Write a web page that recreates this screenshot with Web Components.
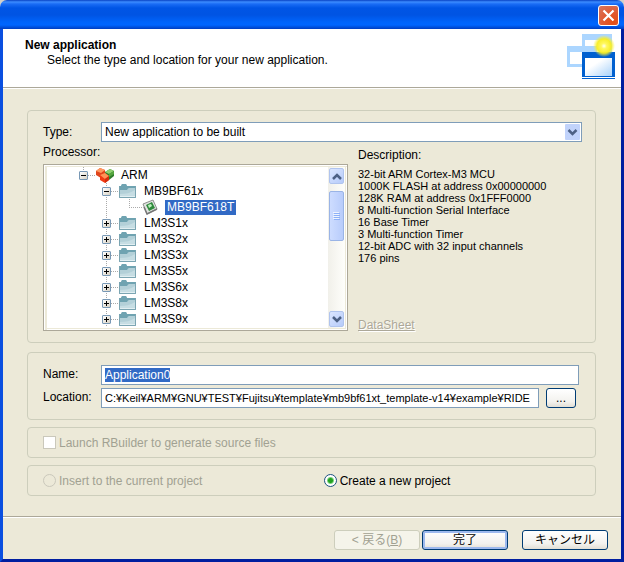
<!DOCTYPE html>
<html lang="ja">
<head>
<meta charset="utf-8">
<title>New application</title>
<style>
html, body { height: 100%; margin: 0; }
body { background: #d4d0c8; font: 12px/12px "Liberation Sans", "Noto Sans CJK JP", sans-serif; color: #000; }
</style>
</head>
<body>
<wizard-window></wizard-window>
<script>
function define(name, html, setup) {
  const template = document.createElement('template');
  template.innerHTML = '<style>*{box-sizing:border-box}</style>' + html;
  customElements.define(name, class extends HTMLElement {
    constructor() {
      super();
      this.attachShadow({ mode: 'open' }).append(template.content.cloneNode(true));
    }
    connectedCallback() { if (setup) setup(this, this.shadowRoot); }
  });
}

define('group-box', `
<style>
:host { display: block; box-sizing: border-box; border: 1px solid #cdcebc; border-radius: 4px; }
</style>
<slot></slot>`);

define('xp-button', `
<style>
:host { display: block; width: 86px; height: 20px; }
:host([small]) { width: 30px; }
button { display: block; width: 100%; height: 100%; padding: 0; border: 1px solid #003c74; border-radius: 3px;
  font: inherit; color: #000; background: linear-gradient(#fff, #f3f2ee 70%, #e2dfd5); }
:host([primary]) button { box-shadow: inset 0 0 0 2px #9db9ee; }
button:disabled { color: #a1a192; border-color: #cdcebc; background: #f5f4ea; }
</style>
<button type="button"><slot></slot></button>`, (host, root) => {
  root.querySelector('button').disabled = host.hasAttribute('disabled');
});

define('title-bar', `
<style>
:host { display: flex; justify-content: flex-end; align-items: center; height: 29px; padding: 2px 5px 0 0; box-sizing: border-box;
  background: linear-gradient(#0842c4 0, #3c8cff 2px, #1a6cf5 4px, #0055e5 8px, #0054e3 15px, #0064fb 22px, #0066ff 25px, #0048d0 28px, #003dc0 29px); }
button { display: grid; place-items: center; width: 21px; height: 21px; padding: 0; border: 1px solid #fff; border-radius: 3px;
  background: radial-gradient(circle at 75% 85%, #e44d14, #e05a32 45%, #d8745c 95%); }
svg { display: block; }
</style>
<button type="button" aria-label="Close"><svg width="13" height="13" viewBox="0 0 13 13"><path d="M1.500 1.500l10 10M11.500 1.500l-10 10" stroke="#fff" stroke-width="2.200"/></svg></button>`);

define('wizard-header', `
<style>
:host { display: flex; justify-content: space-between; height: 60px; padding: 5px 6px 0 22px; box-sizing: border-box; background: #fff;
  border-bottom: 1px solid #fff; box-shadow: inset 0 -1px #aca899; }
h1 { margin: 5px 0 3px; font-size: 12px; line-height: 12px; }
p { margin: 0; padding-left: 22px; line-height: 13px; }
svg { display: block; }
</style>
<div><h1>New application</h1><p>Select the type and location for your new application.</p></div>
<svg width="48" height="46" viewBox="0 0 48 46">
  <defs>
    <radialGradient id="sun"><stop offset="0" stop-color="#fffff0"/><stop offset=".25" stop-color="#fff860"/><stop offset=".65" stop-color="#f8ee20" stop-opacity=".95"/><stop offset="1" stop-color="#f8f040" stop-opacity="0"/></radialGradient>
    <linearGradient id="glass" x1="0" y1="0" x2="1" y2="1"><stop offset=".35" stop-color="#fff"/><stop offset="1" stop-color="#a8d2fa"/></linearGradient>
  </defs>
  <path d="M15 0h30v20h-30z" fill="#acd6ff"/><path d="M18 6h24v12h-24z" fill="#fff"/>
  <path d="M0 12h30v21h-30z" fill="#acd6ff"/><path d="M3 18h24v12h-24z" fill="#fff"/>
  <path d="M15 18h33v25h-33zM15 44h33v1h-33z" fill="#0060d0"/><path d="M18 24h27v18h-27z" fill="url(#glass)"/>
  <circle cx="37" cy="12" r="11" fill="url(#sun)"/>
</svg>`);

define('select-field', `
<style>
:host { display: grid; grid-template-columns: 58px 1fr; align-items: center; }
.box { position: relative; height: 20px; border: 1px solid #7f9db9; background: #fff; }
select { display: block; width: 100%; height: 100%; padding: 0 20px 0 3px; border: 0; outline: 0; appearance: none; background: none; font: inherit; color: inherit; }
svg { position: absolute; right: 1px; top: 1px; pointer-events: none; }
</style>
<label for="type"><slot></slot></label>
<div class="box"><select id="type"><option>New application to be built</option></select>
<svg width="15" height="16" viewBox="0 0 15 16"><rect width="15" height="16" rx="1" fill="#c1d3fb"/><path d="M3.500 6l4 4 4-4" fill="none" stroke="#4d6185" stroke-width="2.500"/></svg></div>`);

define('text-field', `
<style>
:host { display: grid; grid-template-columns: 58px 1fr; align-items: center; }
label { padding-bottom: 3px; }
input { width: 100%; min-width: 0; height: 20px; padding: 0 3px; border: 1px solid #7f9db9; border-radius: 0; outline: 0; background: #fff; font: inherit; color: inherit; }
:host([compact]) input { font-size: 11px; }
input::selection { background: #316ac5; color: #fff; }
</style>
<label for="field"><slot></slot></label><input id="field" type="text" spellcheck="false">`, (host, root) => {
  const input = root.querySelector('input');
  input.value = host.getAttribute('value');
  if (host.hasAttribute('selected')) { input.focus(); input.select(); }
});

define('choice-field', `
<style>
:host { display: block; }
label { display: flex; align-items: center; gap: 3px; }
input { appearance: none; flex: none; width: 13px; height: 13px; margin: 0; border: 1px solid #1c5180; background: #fff; }
input[type=radio] { border-radius: 50%; }
input[type=radio]:checked { background: radial-gradient(circle, #21a121 0 2px, #7fd27f 3px, #fff 4px); }
input:disabled { border-color: #cac8bb; }
input[type=radio]:disabled { background: none; }
:host([disabled]) { color: #a1a192; }
</style>
<label><input><span><slot></slot></span></label>`, (host, root) => {
  const input = root.querySelector('input');
  input.type = host.getAttribute('type');
  input.name = 'choice';
  input.checked = host.hasAttribute('checked');
  input.disabled = host.hasAttribute('disabled');
});

const icons = {
  blocks: `<path d="M9 5l5-3 4 2v5l-5 4-4-3z" fill="#2f7d2c"/><path d="M9 5l5-3 4 2-5 3z" fill="#8fd070"/><path d="M13 7l5-3v3l-5 3z" fill="#55a63f"/><path d="M0 4l4-3 5 2v5l-4 3-5-3z" fill="#e0451c"/><path d="M0 4l4-3 5 2-4 3z" fill="#ff9a60"/><path d="M4 8l5-2 4 3v4l-4 3-5-3z" fill="#f23a12"/><path d="M4 8l5-2 4 3-4 3z" fill="#ff9458"/><path d="M9 12l4-3v4l-4 3z" fill="#d42c0c"/>`,
  folder: `<path d="M0 3h2l1-2h4l1 2h9v12H0z" fill="#8db8c3"/><path d="M0 3h2l1-2h4l1 2h9v2H9L8 7H0z" fill="#6fa3b1"/><path d="M1 7h7l2-2h6v9H1z" fill="#b3d0d8"/><path d="M1 11c6 0 10-1 15-4v7H1z" fill="#c6dde3"/><path d="M1 13h15v1H1z" fill="#e2eff2"/><path d="M.5 3.500v11h16V3.500" fill="none" stroke="#7ba5b2"/>`,
  chip: `<path d="M1 5l10-4 4 9-10 5z" fill="#e2e4e2" stroke="#8b8f8b"/><path d="M2 8l3 7 10-5" fill="none" stroke="#777" stroke-width="1.500"/><path d="M4 6l6-3 3 6-6 3z" fill="#2f8a3c"/><path d="M6 6l3-1 1 2-3 2z" fill="#c0f0c0"/>`
};

define('tree-node', `
<style>
:host { display: block; background: repeating-linear-gradient(#aaa 0 1px, transparent 1px 2px) 4px 0 / 1px 100% no-repeat; }
:host([last]) { background-size: 1px 8px; }
.row { display: flex; align-items: center; height: 16px; }
.toggle { display: block; flex: none; width: 9px; height: 9px; padding: 0; border: 1px solid #7898b5; border-radius: 1px; background: linear-gradient(135deg, #fff, #d8d2c4); }
.toggle svg { display: block; }
.dots { flex: none; width: 8px; height: 1px; background: repeating-linear-gradient(90deg, #aaa 0 1px, transparent 1px 2px); }
:host([icon=chip]) .toggle { display: none; }
:host([icon=chip]) .dots { width: 13px; margin-left: 4px; }
.icon { flex: none; width: 23px; height: 16px; }
.icon svg { display: block; }
.name { padding: 0 2px; line-height: 15px; white-space: nowrap; }
:host([selected]) .name { background: #316ac5; color: #fff; }
.children { padding-left: 23px; }
</style>
<div class="row"><button class="toggle" type="button" aria-label="Toggle"><svg width="7" height="7"><path class="mark" stroke="#000"/></svg></button><span class="dots"></span><span class="icon"></span><span class="name"></span></div>
<div class="children"><slot></slot></div>`, (host, root) => {
  host.setAttribute('role', 'treeitem');
  root.querySelector('.mark').setAttribute('d', host.hasAttribute('open') ? 'M1 3.5h5' : 'M1 3.5h5M3.5 1v5');
  root.querySelector('.icon').innerHTML = '<svg width="20" height="16" viewBox="0 0 20 16">' + icons[host.getAttribute('icon')] + '</svg>';
  root.querySelector('.name').textContent = host.getAttribute('name');
});

define('scroll-bar', `
<style>
:host { display: flex; flex-direction: column; width: 17px; padding: 1px; box-sizing: border-box; background: linear-gradient(90deg, #f1f0ea, #fefefb); }
button { display: grid; place-items: center; width: 100%; height: 16px; padding: 0; border: 1px solid #b0c4ee; border-radius: 2px; background: linear-gradient(135deg, #dbe6ff, #b6cbfa); }
.track { flex: 1; padding-top: 7px; }
.thumb { display: grid; place-items: center; height: 50px; border: 1px solid #9ab4e6; border-radius: 2px; background: linear-gradient(90deg, #cddcff, #b8ccfb); }
svg { display: block; }
</style>
<button type="button" aria-label="Up"><svg width="10" height="7"><path d="M1 6l4-4 4 4" fill="none" stroke="#4d6185" stroke-width="2.500"/></svg></button>
<div class="track"><div class="thumb"><svg width="7" height="8"><path d="M0 .5h6M0 2.500h6M0 4.500h6M0 6.500h6" stroke="#eef4fe"/><path d="M1 1.500h6M1 3.500h6M1 5.500h6M1 7.500h6" stroke="#8cb0f8"/></svg></div></div>
<button type="button" aria-label="Down"><svg width="10" height="7"><path d="M1 1l4 4 4-4" fill="none" stroke="#4d6185" stroke-width="2.500"/></svg></button>`);

define('processor-tree', `
<style>
:host { display: flex; height: 167px; padding: 2px 2px 2px 4px; box-sizing: border-box; overflow: hidden; border: 1px solid #aca899; background: #fff; box-shadow: inset 1px 1px #fff, inset 3px 2px #ece9d8, inset -1px -1px #fff, inset -2px -2px #ece9d8; }
.list { flex: 1; min-width: 0; overflow: hidden; padding-left: 31px; }
</style>
<div class="list" role="tree"><slot></slot></div><scroll-bar></scroll-bar>`);

define('wizard-window', `
<style>
:host { display: flex; flex-direction: column; min-height: 100vh; box-sizing: border-box; border-radius: 7px 7px 0 0; overflow: hidden; background: #ece9d8; }
.frame { flex: 1; display: flex; flex-direction: column; border: solid; border-width: 0 3px 3px; border-color: #0a4fe0 #001ea0 #001ea0 #0a4fe0; }
main { flex: 1; display: flex; flex-direction: column; padding: 21px 25px 0 24px; }
group-box { padding: 0 14px 0 15px; }
.source { padding: 11px 13px 11px 15px; }
.columns { display: grid; grid-template-columns: 305px minmax(0, 1fr); gap: 10px; }
.cap { display: block; margin: 4px 0 6px; }
.about .cap { margin: 7px 0 7px; }
.about { display: flex; flex-direction: column; align-items: flex-start; white-space: nowrap; }
.about p { margin: 0; flex: 1; font-size: 11px; }
a { color: #aca899; text-shadow: 1px 1px #fff; }
.names { margin-top: 9px; padding-top: 12px; padding-bottom: 11px; display: flex; flex-direction: column; gap: 3px; }
.names > text-field { margin-right: 2px; }
.place { display: flex; align-items: center; gap: 7px; padding-right: 5px; }
.place text-field { flex: 1; }
.option { margin-top: 7px; height: 31px; display: grid; align-items: center; }
.pair { grid-template-columns: 12fr 11fr; }
footer { display: flex; justify-content: flex-end; height: 43px; padding: 13px 13px 0 0; border-top: 1px solid #aca899; box-shadow: inset 0 1px #fff; box-sizing: border-box; }
footer xp-button + xp-button { margin-left: 2px; }
footer xp-button[cancel] { margin-left: 14px; }
</style>
<title-bar></title-bar>
<div class="frame">
<wizard-header></wizard-header>
<main>
<group-box class="source">
  <select-field>Type:</select-field>
  <div class="columns">
    <div><span class="cap">Processor:</span>
      <processor-tree>
        <tree-node name="ARM" icon="blocks" open last>
          <tree-node name="MB9BF61x" icon="folder" open><tree-node name="MB9BF618T" icon="chip" selected last></tree-node></tree-node>
          <tree-node name="LM3S1x" icon="folder"></tree-node>
          <tree-node name="LM3S2x" icon="folder"></tree-node>
          <tree-node name="LM3S3x" icon="folder"></tree-node>
          <tree-node name="LM3S5x" icon="folder"></tree-node>
          <tree-node name="LM3S6x" icon="folder"></tree-node>
          <tree-node name="LM3S8x" icon="folder"></tree-node>
          <tree-node name="LM3S9x" icon="folder"></tree-node>
        </tree-node>
      </processor-tree>
    </div>
    <div class="about"><span class="cap">Description:</span>
      <p>32-bit ARM Cortex-M3 MCU<br>1000K FLASH at address 0x00000000<br>128K RAM at address 0x1FFF0000<br>8 Multi-function Serial Interface<br>16 Base Timer<br>3 Multi-function Timer<br>12-bit ADC with 32 input channels<br>176 pins</p>
      <a href="#datasheet">DataSheet</a>
    </div>
  </div>
</group-box>
<group-box class="names">
  <text-field value="Application0" selected>Name:</text-field>
  <div class="place"><text-field compact value="C:¥Keil¥ARM¥GNU¥TEST¥Fujitsu¥template¥mb9bf61xt_template-v14¥example¥RIDE">Location:</text-field><xp-button small>...</xp-button></div>
</group-box>
<group-box class="option"><choice-field type="checkbox" disabled>Launch RBuilder to generate source files</choice-field></group-box>
<group-box class="option pair"><choice-field type="radio" disabled>Insert to the current project</choice-field><choice-field type="radio" checked>Create a new project</choice-field></group-box>
</main>
<footer><xp-button disabled>&lt; 戻る(<u>B</u>)</xp-button><xp-button primary>完了</xp-button><xp-button cancel>キャンセル</xp-button></footer>
</div>`);
</script>
</body>
</html>
